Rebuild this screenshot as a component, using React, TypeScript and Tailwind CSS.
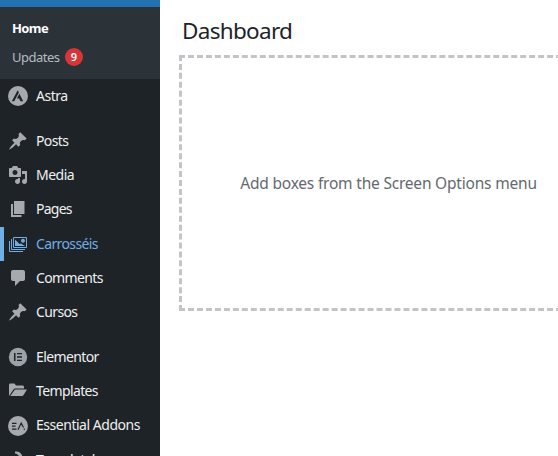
import type { ReactNode } from "react";

const Pin = () => (
  <svg width="20" height="20" viewBox="0 0 20 20" fill="currentColor">
    <path d="M10.44 3.02l1.82-1.82 6.36 6.35-1.83 1.82c-1.05-.68-2.48-.57-3.41.36l-.75.75c-.92.93-1.04 2.35-.35 3.41l-1.83 1.82-2.41-2.41-2.8 2.79c-.42.42-3.38 2.71-3.8 2.29s1.86-3.39 2.28-3.81l2.79-2.79L4.1 9.36l1.83-1.82c1.05.69 2.48.57 3.4-.36l.75-.75c.93-.92 1.05-2.35.36-3.41z" />
  </svg>
);

const Media = () => (
  <svg width="20" height="20" viewBox="0 0 20 20" fill="currentColor">
    <path d="M13 11V4c0-.55-.45-1-1-1h-1.670L9 1H5L3.670 3H2c-.55 0-1 .45-1 1v7c0 .55.45 1 1 1h10c.55 0 1-.45 1-1zM7 5c1.380 0 2.500 1.120 2.500 2.500S8.380 10 7 10 4.500 8.880 4.500 7.500 5.620 5 7 5zM14 6h5v10.500c0 1.380-1.120 2.500-2.500 2.500S14 17.880 14 16.500s1.120-2.500 2.500-2.500c.17 0 .34.020.5.050V9h-3V6zm-4 8.050V13h2v3.500c0 1.380-1.120 2.500-2.500 2.500S7 17.880 7 16.500 8.120 14 9.500 14c.17 0 .34.020.5.050z" />
  </svg>
);

const Pages = () => (
  <svg width="20" height="20" viewBox="0 0 20 20" fill="currentColor">
    <path d="M6 15V2h10.500v13H6zm-1 1h8.500v2H3V5h2v11z" />
  </svg>
);

const Comments = () => (
  <svg width="20" height="20" viewBox="0 0 20 20" fill="currentColor">
    <path d="M5 2h10c1.100 0 2 .9 2 2v7c0 1.100-.9 2-2 2h-3l-5 5v-5H5c-1.100 0-2-.9-2-2V4c0-1.100.9-2 2-2z" />
  </svg>
);

const Carousel = () => (
  <svg width="20" height="20" viewBox="0 0 20 20" fill="none" stroke="currentColor">
    <path d="M5.500 3.500h13v10h-13zM3.500 5v10.500H17M1.500 7v10.500H15" />
    <path d="M7 5.500V12h10l-4-2.500-1.500.5L7 5.500z" fill="currentColor" stroke="none" />
    <circle cx="15" cy="6.800" r="2" fill="currentColor" stroke="none" />
  </svg>
);

const Astra = () => (
  <svg width="20" height="20" viewBox="0 0 20 20">
    <circle cx="10" cy="10" r="10" fill="#a7aaad" />
    <path d="M9.700 4.200 3.800 15.300h2.400L10.900 6.500zM11.400 7.800l-2.500 4.700h2.300l1.200 2.800h2.800z" fill="#1d2327" />
  </svg>
);

const Elementor = () => (
  <svg width="20" height="20" viewBox="0 0 20 20">
    <circle cx="10" cy="10" r="9.200" fill="#9ca2a7" />
    <path d="M6 6h1.500v8H6zM9 6h5v1.300H9zM9 9.300h5v1.400H9zM9 12.700h5V14H9z" fill="#1d2327" />
  </svg>
);

const Folder = () => (
  <svg width="20" height="20" viewBox="0 0 20 20" fill="currentColor">
    <path d="M1 13.500V4c0-.8.600-1.500 1.500-1.500h4l1.500 2h6.500c.8 0 1.500.6 1.500 1.500v1.500H7.500c-1 0-1.700.4-2.200 1.200L1 15zM2.300 15 6.200 9.400c.3-.5.8-.8 1.400-.8H19l-3.600 5.600c-.3.500-.8.800-1.400.8z" />
  </svg>
);

const EssentialAddons = () => (
  <svg className="relative top-px" width="20" height="20" viewBox="0 0 20 20">
    <circle cx="10" cy="10" r="10" fill="#a7aaad" />
    <path d="M4 7.300h4.500M4 10.200h3.500M4 13.100h4.500M10 13.700 13.200 7l2.300 4.500" fill="none" stroke="#1d2327" strokeWidth="1.200" />
    <circle cx="16.300" cy="13.200" r=".7" fill="#1d2327" />
  </svg>
);

const Templately = () => (
  <svg width="20" height="20" viewBox="0 0 20 20" fill="currentColor">
    <path d="M7 1.500c4.500-.5 7.500 2 7.500 6.500 0 5-4 9-9 9.500C8 15 9 12.500 8.500 10H12C12 6.500 10 4 7 3.500z" />
  </svg>
);

type ItemProps = { icon: ReactNode; label: string; text?: string; active?: boolean };

function Item({ icon, label, text = "tracking-[-0.62px]", active }: ItemProps) {
  return (
    <li
      className={`flex h-[34px] shrink-0 items-center border-l-4 ${
        active ? "border-[#72aee6] text-[#72aee6]" : "border-transparent text-[#a7aaad]"
      }`}
    >
      <span className="ml-1 flex w-5 shrink-0">{icon}</span>
      <span className={`ml-2 whitespace-nowrap text-[14px] leading-5 ${text} ${active ? "" : "text-[#f0f0f1]"}`}>
        {label}
      </span>
    </li>
  );
}

export default function App() {
  return (
    <div className="flex h-[456px] w-[558px] overflow-hidden bg-white font-['Noto_Sans','Open_Sans',sans-serif]">
      <nav className="flex w-40 shrink-0 flex-col overflow-hidden bg-[#1d2327]">
        <div className="h-[7px] shrink-0 bg-[#2271b1]" />
        <ul className="flex h-[72px] shrink-0 flex-col bg-[#2c3338] pl-3 pt-3 text-[13px] leading-[18px]">
          <li className="font-bold tracking-[-0.6px] text-white">Home</li>
          <li className="mt-[11px] flex items-center text-[#b5bcc2]">
            <span className="w-[53px] tracking-[-0.5px]">Updates</span>
            <span className="flex size-[18px] items-center justify-center rounded-full bg-[#d63638] text-[11px] font-semibold text-white">
              9
            </span>
          </li>
        </ul>
        <ul className="flex flex-col">
          <Item icon={<Astra />} label="Astra" text="tracking-[-0.5px]" />
          <li className="h-[11px] shrink-0" />
          <Item icon={<Pin />} label="Posts" />
          <Item icon={<Media />} label="Media" text="tracking-[-0.5px]" />
          <Item icon={<Pages />} label="Pages" text="tracking-[-0.75px]" />
          <li className="h-px shrink-0" />
          <Item icon={<Carousel />} label="Carrosséis" active />
          <Item icon={<Comments />} label="Comments" />
          <Item icon={<Pin />} label="Cursos" />
          <li className="h-[11px] shrink-0" />
          <Item icon={<Elementor />} label="Elementor" />
          <Item icon={<Folder />} label="Templates" />
          <Item icon={<EssentialAddons />} label="Essential Addons" text="tracking-[-0.47px]" />
          <li className="h-px shrink-0" />
          <Item icon={<Templately />} label="Templately" />
        </ul>
      </nav>
      <main className="flex flex-col pl-[19px]">
        <h1 className="ml-[3px] mt-4 h-[39px] text-[22.5px] font-normal leading-[30px] tracking-[-0.7px] text-[#1d2327]">
          Dashboard
        </h1>
        <section className="flex h-64 w-[419px] items-center justify-center border-[3px] border-dashed border-[#c3c4c7]">
          <p className="whitespace-nowrap pt-0.5 text-[15.5px] tracking-[-0.2px] text-[#646970]">
            Add boxes from the Screen Options menu
          </p>
        </section>
      </main>
    </div>
  );
}
